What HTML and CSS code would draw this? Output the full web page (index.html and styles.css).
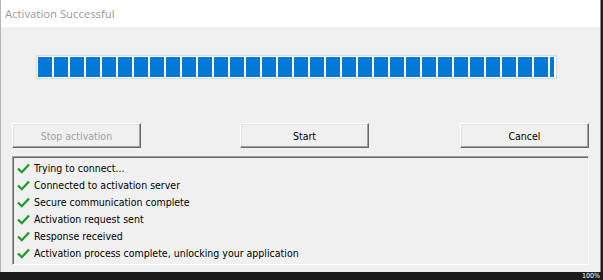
FILE: index.html
```html
<!DOCTYPE html>
<html lang="en">
<head>
    <meta charset="UTF-8">
    <title>Activation Successful</title>
    <link rel="stylesheet" href="styles.css">
</head>
<body>

<div class="window">
    <div class="titlebar">Activation Successful</div>
    <div class="content">
        <div class="progress"><div class="progress-fill"></div></div>

        <div class="buttons">
            <button class="btn" disabled>Stop activation</button>
            <button class="btn btn-start">Start</button>
            <button class="btn btn-cancel">Cancel</button>
        </div>

        <ul class="log">
            <li><svg class="check" viewBox="0 0 13 11"><path d="M1 5.5 L4.8 9.2 L12 1.5"/></svg>Trying to connect...</li>
            <li><svg class="check" viewBox="0 0 13 11"><path d="M1 5.5 L4.8 9.2 L12 1.5"/></svg>Connected to activation server</li>
            <li><svg class="check" viewBox="0 0 13 11"><path d="M1 5.5 L4.8 9.2 L12 1.5"/></svg>Secure communication complete</li>
            <li><svg class="check" viewBox="0 0 13 11"><path d="M1 5.5 L4.8 9.2 L12 1.5"/></svg>Activation request sent</li>
            <li><svg class="check" viewBox="0 0 13 11"><path d="M1 5.5 L4.8 9.2 L12 1.5"/></svg>Response received</li>
            <li><svg class="check" viewBox="0 0 13 11"><path d="M1 5.5 L4.8 9.2 L12 1.5"/></svg>Activation process complete, unlocking your application</li>
        </ul>
    </div>
</div>
<div class="taskbar"><span class="zoom">100%</span></div>

</body>
</html>
```

FILE: styles.css
```css
body {
    margin: 0;
    background-color: #1c1c1c;
    font-family: "DejaVu Sans Condensed", "DejaVu Sans", Verdana, sans-serif;
    overflow: hidden;
}
.window {
    width: 601px;
    border-right: 1px solid #8c8c8c;
    border-left: 1px solid #b4b4b4;
    box-sizing: border-box;
}
.titlebar {
    height: 27px;
    background-color: #fff;
    color: #9a9a9a;
    font-family: "Open Sans", "Noto Sans", sans-serif;
    font-size: 11.3px;
    line-height: 27px;
    padding-left: 4px;
}
.content {
    background-color: #f0f0f0;
    height: 245px;
    padding: 28px 11px 0 11px;
    box-sizing: border-box;
}
.progress {
    margin-left: 24px;
    width: 521px;
    height: 24px;
    box-sizing: border-box;
    border: 1px solid #dadada;
    background-color: #fff;
    padding: 1px 2px 1px 1px;
}
.progress-fill {
    height: 100%;
    background: repeating-linear-gradient(90deg, #0078d7 0, #0078d7 14px, transparent 14px, transparent 16px);
}
.buttons {
    display: flex;
    margin-top: 44px;
}
.btn {
    width: 129px;
    height: 25px;
    background-color: #f0f0f0;
    border: 1px solid;
    border-color: #fff #696969 #696969 #fff;
    box-shadow: inset -1px -1px 0 #a0a0a0, inset 1px 1px 0 #e3e3e3;
    font-family: "DejaVu Sans Condensed", "DejaVu Sans", Verdana, sans-serif;
    font-size: 10.5px;
    color: #000;
    padding: 0;
}
.btn:disabled {
    color: #a0a0a0;
}
.btn-start {
    margin-left: 99px;
}
.btn-cancel {
    margin-left: 91px;
}
.log {
    list-style: none;
    margin: 8px 0 0 0;
    padding: 3px 0 0 4px;
    width: 577px;
    height: 109px;
    box-sizing: border-box;
    border: 1px solid;
    border-color: #a0a0a0 #fff #fff #a0a0a0;
    box-shadow: inset 1px 1px 0 #696969;
    font-size: 10.5px;
    color: #000;
}
.log li {
    height: 17px;
    line-height: 17px;
    display: flex;
    align-items: center;
}
.check {
    width: 13px;
    height: 11px;
    margin-right: 4px;
    fill: none;
    stroke: #1f9a2a;
    stroke-width: 2.3;
}
.taskbar {
    height: 8px;
    position: relative;
}
.zoom {
    position: absolute;
    right: 3px;
    top: 0;
    color: #fff;
    font-size: 7px;
    line-height: 8px;
}
```
